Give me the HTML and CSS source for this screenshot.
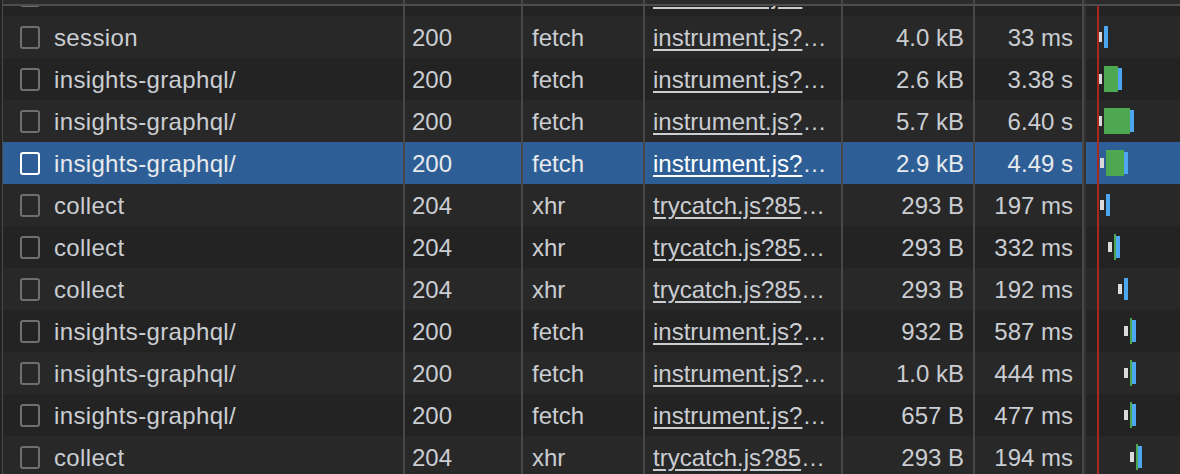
FILE: index.html
```html
<!DOCTYPE html>
<html>
<head>
<meta charset="utf-8">
<link rel="stylesheet" href="styles.css">
</head>
<body>
<div class="grid">
  <div class="row head">
    <div class="cell"></div><div class="cell"></div><div class="cell"></div><div class="cell"></div><div class="cell"></div><div class="cell"></div><div class="cell wf"></div>
  </div>
  <div class="viewport">
    <div class="rows">
      <div class="row">
        <div class="cell name"><span class="box"></span><span>session</span></div>
        <div class="cell status">200</div><div class="cell type">fetch</div>
        <div class="cell init"><span class="link">instrument.js?</span>…</div>
        <div class="cell num">1.2 kB</div><div class="cell num">35 ms</div>
        <div class="cell wf" style="padding-left:14px"><i class="q"></i><i class="b"></i></div>
      </div>
      <div class="row">
        <div class="cell name"><span class="box"></span><span>session</span></div>
        <div class="cell status">200</div><div class="cell type">fetch</div>
        <div class="cell init"><span class="link">instrument.js?</span>…</div>
        <div class="cell num">4.0 kB</div><div class="cell num">33 ms</div>
        <div class="cell wf" style="padding-left:14px"><i class="q"></i><i class="b"></i></div>
      </div>
      <div class="row">
        <div class="cell name"><span class="box"></span><span>insights-graphql/</span></div>
        <div class="cell status">200</div><div class="cell type">fetch</div>
        <div class="cell init"><span class="link">instrument.js?</span>…</div>
        <div class="cell num">2.6 kB</div><div class="cell num">3.38 s</div>
        <div class="cell wf" style="padding-left:14px"><i class="q"></i><i class="g" style="width:14px"></i><i class="b"></i></div>
      </div>
      <div class="row">
        <div class="cell name"><span class="box"></span><span>insights-graphql/</span></div>
        <div class="cell status">200</div><div class="cell type">fetch</div>
        <div class="cell init"><span class="link">instrument.js?</span>…</div>
        <div class="cell num">5.7 kB</div><div class="cell num">6.40 s</div>
        <div class="cell wf" style="padding-left:14px"><i class="q"></i><i class="g" style="width:26px"></i><i class="b"></i></div>
      </div>
      <div class="row sel">
        <div class="cell name"><span class="box"></span><span>insights-graphql/</span></div>
        <div class="cell status">200</div><div class="cell type">fetch</div>
        <div class="cell init"><span class="link">instrument.js?</span>…</div>
        <div class="cell num">2.9 kB</div><div class="cell num">4.49 s</div>
        <div class="cell wf" style="padding-left:16px"><i class="q"></i><i class="g" style="width:18px"></i><i class="b"></i></div>
      </div>
      <div class="row">
        <div class="cell name"><span class="box"></span><span>collect</span></div>
        <div class="cell status">204</div><div class="cell type">xhr</div>
        <div class="cell init"><span class="link">trycatch.js?85</span>…</div>
        <div class="cell num">293 B</div><div class="cell num">197 ms</div>
        <div class="cell wf" style="padding-left:16px"><i class="q"></i><i class="b"></i></div>
      </div>
      <div class="row">
        <div class="cell name"><span class="box"></span><span>collect</span></div>
        <div class="cell status">204</div><div class="cell type">xhr</div>
        <div class="cell init"><span class="link">trycatch.js?85</span>…</div>
        <div class="cell num">293 B</div><div class="cell num">332 ms</div>
        <div class="cell wf" style="padding-left:24px"><i class="q"></i><i class="g" style="width:2px"></i><i class="b"></i></div>
      </div>
      <div class="row">
        <div class="cell name"><span class="box"></span><span>collect</span></div>
        <div class="cell status">204</div><div class="cell type">xhr</div>
        <div class="cell init"><span class="link">trycatch.js?85</span>…</div>
        <div class="cell num">293 B</div><div class="cell num">192 ms</div>
        <div class="cell wf" style="padding-left:34px"><i class="q"></i><i class="b"></i></div>
      </div>
      <div class="row">
        <div class="cell name"><span class="box"></span><span>insights-graphql/</span></div>
        <div class="cell status">200</div><div class="cell type">fetch</div>
        <div class="cell init"><span class="link">instrument.js?</span>…</div>
        <div class="cell num">932 B</div><div class="cell num">587 ms</div>
        <div class="cell wf" style="padding-left:40px"><i class="q"></i><i class="g" style="width:2px"></i><i class="b"></i></div>
      </div>
      <div class="row">
        <div class="cell name"><span class="box"></span><span>insights-graphql/</span></div>
        <div class="cell status">200</div><div class="cell type">fetch</div>
        <div class="cell init"><span class="link">instrument.js?</span>…</div>
        <div class="cell num">1.0 kB</div><div class="cell num">444 ms</div>
        <div class="cell wf" style="padding-left:40px"><i class="q"></i><i class="g" style="width:2px"></i><i class="b"></i></div>
      </div>
      <div class="row">
        <div class="cell name"><span class="box"></span><span>insights-graphql/</span></div>
        <div class="cell status">200</div><div class="cell type">fetch</div>
        <div class="cell init"><span class="link">instrument.js?</span>…</div>
        <div class="cell num">657 B</div><div class="cell num">477 ms</div>
        <div class="cell wf" style="padding-left:40px"><i class="q"></i><i class="g" style="width:2px"></i><i class="b"></i></div>
      </div>
      <div class="row">
        <div class="cell name"><span class="box"></span><span>collect</span></div>
        <div class="cell status">204</div><div class="cell type">xhr</div>
        <div class="cell init"><span class="link">trycatch.js?85</span>…</div>
        <div class="cell num">293 B</div><div class="cell num">194 ms</div>
        <div class="cell wf" style="padding-left:46px"><i class="q"></i><i class="g" style="width:2px"></i><i class="b"></i></div>
      </div>
    </div>
  </div>
  <div class="marker"></div>
</div>
</body>
</html>
```
FILE: styles.css
```css
html, body {
  margin: 0;
  padding: 0;
  background: #232323;
  overflow: hidden;
}
body {
  width: 1180px;
  height: 474px;
  font-family: "Liberation Sans", Arial, sans-serif;
  font-size: 24px;
  color: #cacdd2;
}
.grid {
  position: relative;
  height: 474px;
  margin-left: 2px;
  border-left: 1px solid #4a4a4a;
  overflow: hidden;
}
.row {
  display: grid;
  grid-template-columns: 402px 118px 122px 198px 132px 109px 1fr;
  height: 42px;
  line-height: 40px;
  background: #232323;
}
.rows .row:nth-child(even) {
  background: #282828;
}
.row.head {
  height: 4px;
  line-height: 4px;
  background: #2b2b2b;
  border-bottom: 2px solid #4d4d4d;
}
.cell {
  box-sizing: border-box;
  border-right: 2px solid #474747;
  white-space: nowrap;
  overflow: hidden;
  padding: 2px 8px 0;
}
.row.head .cell {
  padding-top: 0;
}
.cell.wf {
  border-right: none;
  padding: 0;
  box-shadow: inset 2px 0 0 #333333;
}
.viewport {
  height: 468px;
  overflow: hidden;
}
.rows {
  margin-top: -32px;
}
.name {
  display: flex;
  align-items: center;
  padding-left: 17px;
  gap: 14px;
  letter-spacing: 0.35px;
}
.box {
  display: block;
  box-sizing: border-box;
  width: 20px;
  height: 23px;
  margin-top: -2px;
  border: 2px solid #6f6f6f;
  border-radius: 3px;
  flex: none;
}
.status {
  padding-left: 7px;
}
.type {
  padding-left: 9px;
}
.init {
  padding-left: 8px;
}
.link {
  text-decoration: underline;
  text-underline-offset: 3px;
}
.num {
  text-align: right;
  padding-right: 9px;
}
.rows .row .wf {
  display: flex;
  align-items: center;
}
.wf i {
  display: block;
  flex: none;
}
.wf .q {
  width: 4px;
  height: 10px;
  background: #dadada;
  margin-right: 2px;
}
.wf .g {
  height: 26px;
  background: #4ea852;
}
.wf .b {
  width: 4px;
  height: 22px;
  background: #4ca6f0;
}
.row.sel,
.rows .row.sel {
  background: #2d5f96;
  color: #e8eaed;
}
.row.sel .box {
  border-color: #ffffff;
}
.row.sel .link {
  color: #ffffff;
}
.marker {
  position: absolute;
  left: 1094px;
  top: 6px;
  bottom: 0;
  width: 2px;
  background: #a8281f;
}
```
